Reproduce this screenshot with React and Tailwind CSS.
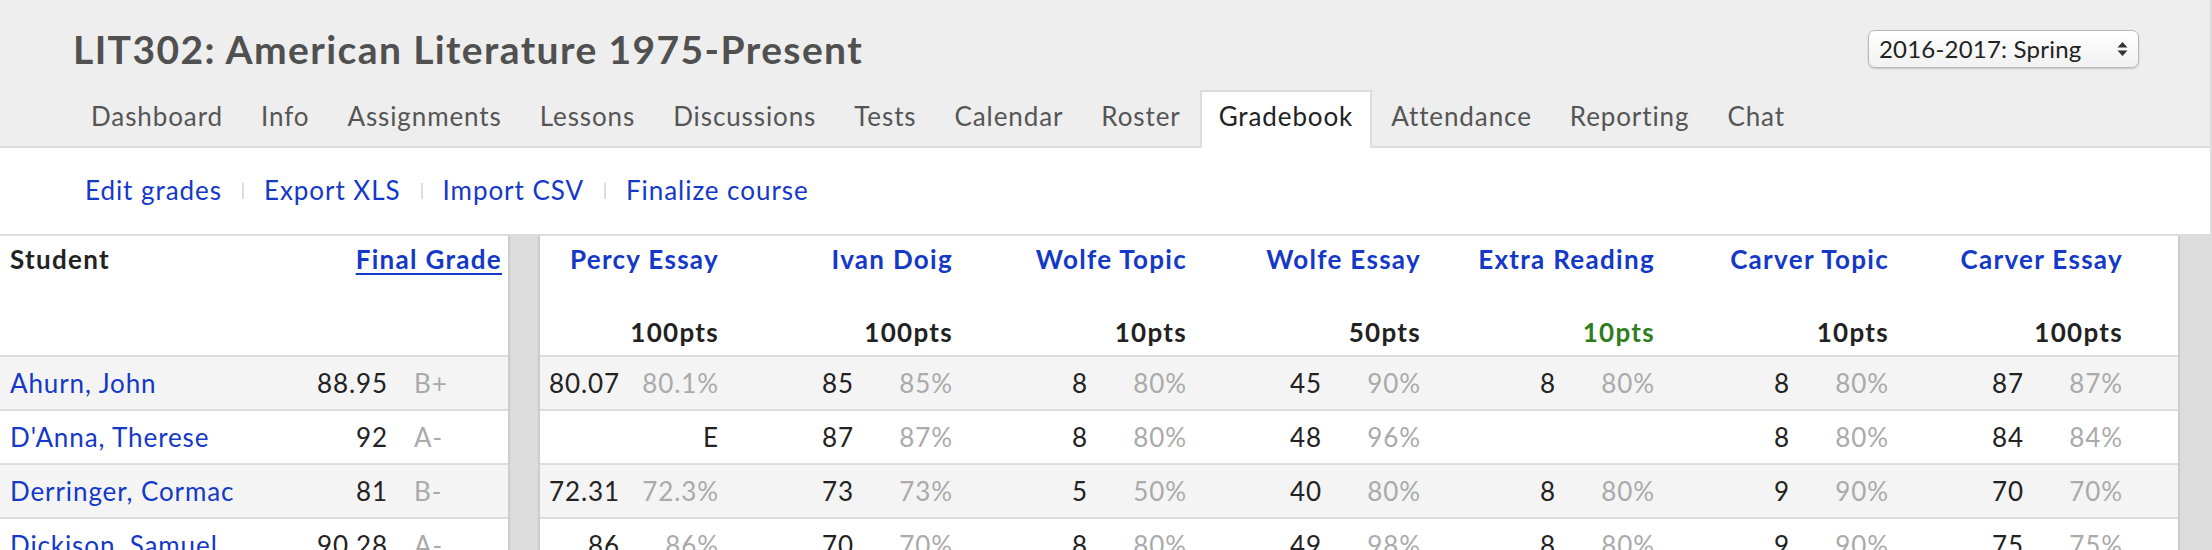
import React from "react";

const TABS = ["Dashboard","Info","Assignments","Lessons","Discussions","Tests","Calendar","Roster","Gradebook","Attendance","Reporting","Chat"];

const COLS = [
  { name: "Percy Essay", pts: "100pts" },
  { name: "Ivan Doig", pts: "100pts" },
  { name: "Wolfe Topic", pts: "10pts" },
  { name: "Wolfe Essay", pts: "50pts" },
  { name: "Extra Reading", pts: "10pts", green: true },
  { name: "Carver Topic", pts: "10pts" },
  { name: "Carver Essay", pts: "100pts" },
];

const ROWS = [
  { name: "Ahurn, John", grade: "88.95", letter: "B+", cells: [["80.07","80.1%"],["85","85%"],["8","80%"],["45","90%"],["8","80%"],["8","80%"],["87","87%"]] },
  { name: "D'Anna, Therese", grade: "92", letter: "A-", cells: [["","E",true],["87","87%"],["8","80%"],["48","96%"],["",""],["8","80%"],["84","84%"]] },
  { name: "Derringer, Cormac", grade: "81", letter: "B-", cells: [["72.31","72.3%"],["73","73%"],["5","50%"],["40","80%"],["8","80%"],["9","90%"],["70","70%"]] },
  { name: "Dickison, Samuel", grade: "90.28", letter: "A-", cells: [["86","86%"],["70","70%"],["8","80%"],["49","98%"],["8","80%"],["9","90%"],["75","75%"]] },
];

function Select() {
  return (
    <div className="w-[271px] h-[38px] rounded-[7px] border border-[#b8b8b8] bg-gradient-to-b from-white to-[#f1f1f1] shadow-[0_1px_2px_rgba(0,0,0,0.18)] flex items-center justify-between pl-[10px] pr-[9px]">
      <span className="text-[24px] leading-[28px] tracking-[0.2px] text-[#222]">2016-2017: Spring</span>
      <svg width="13" height="16" viewBox="0 0 13 16">
        <path d="M6.5 1 L11.5 6.5 L1.5 6.5 Z" fill="#333" />
        <path d="M6.5 15 L11.5 9.5 L1.5 9.5 Z" fill="#333" />
      </svg>
    </div>
  );
}

export default function App() {
  return (
    <div className="w-[2212px] h-[550px] overflow-hidden bg-white font-['Lato',sans-serif]">
      <div className="w-[2212px] border-r-2 border-[#dcdcdc]">
        <div className="bg-[#eeeeee] border-b-2 border-[#dcdcdc] pl-[72px] pr-[71px] pt-[26px]">
          <div className="flex items-center justify-between h-[46px]">
            <h1 className="pl-[1px] text-[39px] leading-[46px] font-bold tracking-[1.4px] text-[#505050] whitespace-nowrap">LIT302: American Literature 1975-Present</h1>
            <Select />
          </div>
          <div className="flex mt-[18px] -mb-[2px]">
            {TABS.map((t) => {
              const active = t === "Gradebook";
              return (
                <div
                  key={t}
                  className={
                    active
                      ? "border-2 border-b-0 border-[#dcdcdc] bg-white px-[17px] pt-[9px] pb-[16px] text-[26px] leading-[31px] tracking-[0.9px] text-[#222]"
                      : "border-2 border-b-0 border-transparent px-[17px] pt-[9px] pb-[16px] text-[26px] leading-[31px] tracking-[0.9px] text-[#555]"
                  }
                >
                  {t}
                </div>
              );
            })}
          </div>
        </div>
        <div className="flex items-center gap-[20px] pl-[85px] pt-[27px] pb-[28px] text-[26px] leading-[31px] tracking-[0.95px] text-[#1438c8]">
          <span>Edit grades</span>
          <span className="w-[2px] h-[16px] bg-[#dddddd]" />
          <span>Export XLS</span>
          <span className="w-[2px] h-[16px] bg-[#dddddd]" />
          <span>Import CSV</span>
          <span className="w-[2px] h-[16px] bg-[#dddddd]" />
          <span>Finalize course</span>
        </div>
      </div>

      <div className="flex border-t-2 border-[#dcdcdc] text-[26px] leading-[31px] tracking-[0.9px]">
        {/* left frozen panel */}
        <div className="w-[508px] shrink-0">
          <div className="h-[121px] border-b-2 border-[#dcdcdc] pt-[8px] flex justify-between font-bold tracking-[1.3px]">
            <span className="pl-[10px] text-[#222]">Student</span>
            <span className="mr-[6px] text-[#1438c8] underline decoration-2 underline-offset-[4px]">Final Grade</span>
          </div>
          {ROWS.map((r, i) => (
            <div key={r.name} className={(i % 2 === 0 ? "bg-[#f4f4f4] " : "bg-white ") + "h-[54px] border-b-2 border-[#dcdcdc] flex items-center"}>
              <span className="w-[300px] pl-[10px] text-[#1438c8] whitespace-nowrap">{r.name}</span>
              <span className="w-[88px] text-right text-[#222]">{r.grade}</span>
              <span className="pl-[26px] text-[#aaaaaa]">{r.letter}</span>
            </div>
          ))}
        </div>

        {/* divider */}
        <div className="w-[32px] shrink-0 bg-[#dcdcdc] border-x-2 border-[#cccccc]" />

        {/* scrolling panel */}
        <div className="w-[1638px] shrink-0">
          <div className="h-[121px] border-b-2 border-[#dcdcdc] flex font-bold tracking-[1.3px]">
            {COLS.map((c) => (
              <div key={c.name} className="w-[234px] pr-[55px] pt-[8px] pb-[7px] flex flex-col justify-between items-end">
                <span className="text-[#1438c8] whitespace-nowrap">{c.name}</span>
                <span className={c.green ? "text-[#2f7d1f]" : "text-[#222]"}>{c.pts}</span>
              </div>
            ))}
          </div>
          {ROWS.map((r, i) => (
            <div key={r.name} className={(i % 2 === 0 ? "bg-[#f4f4f4] " : "bg-white ") + "h-[54px] border-b-2 border-[#dcdcdc] flex items-center"}>
              {r.cells.map((c, j) => (
                <div key={j} className="w-[234px] pr-[55px] flex">
                  <span className="w-[80px] text-right text-[#222]">{c[0]}</span>
                  <span className={(c[2] ? "text-[#222]" : "text-[#aaaaaa]") + " w-[99px] text-right"}>{c[1]}</span>
                </div>
              ))}
            </div>
          ))}
        </div>

        <div className="flex-1 bg-[#dcdcdc] border-l-2 border-[#cccccc]" />
      </div>
    </div>
  );
}
